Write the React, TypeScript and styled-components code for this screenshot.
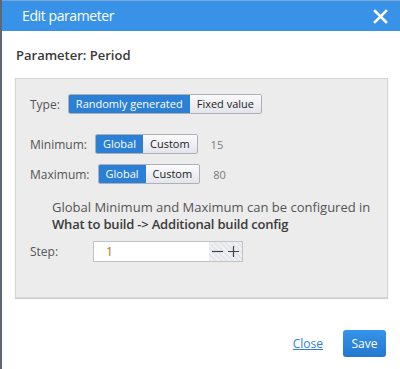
import * as React from "react";
import styled, { createGlobalStyle } from "styled-components";

const GlobalStyle = createGlobalStyle`
  html, body {
    margin: 0;
    padding: 0;
    background: #5d6872;
  }
  body {
    font-family: "Open Sans", "Noto Sans", sans-serif;
    font-size: 13px;
    color: #444;
  }
`;

const Dialog = styled.div`
  margin-left: 2px;
  width: 398px;
  height: 369px;
  background: #ffffff;
  display: flex;
  flex-direction: column;
`;

const Header = styled.div`
  height: 31px;
  background: #3893e8;
  border-top: 1px solid #7aa6cf;
  box-sizing: border-box;
  display: flex;
  align-items: center;
  justify-content: space-between;
  padding: 0 11px 0 20px;
  color: #ffffff;
`;

const Title = styled.div`
  font-size: 14px;
  letter-spacing: -0.4px;
  line-height: 20px;
`;

const CloseIcon = styled.button`
  border: 0;
  background: none;
  padding: 0;
  width: 18px;
  height: 18px;
  display: flex;
  align-items: center;
  justify-content: center;
  cursor: pointer;
`;

const Body = styled.div`
  flex: 1;
  padding: 15px 12px 0 14px;
`;

const ParamTitle = styled.div`
  font-weight: 600;
  font-size: 13px;
  line-height: 18px;
  color: #3a3a3a;
  margin-bottom: 14px;
`;

const Panel = styled.div`
  background: #ececec;
  border: 1px solid #d6d6d6;
  box-shadow: 0 1px 1px rgba(0, 0, 0, 0.18);
  margin-left: -1px;
  padding: 15px 14px 34px 14px;
  height: 220px;
  box-sizing: border-box;
`;

const Row = styled.div<{ gap: number }>`
  display: flex;
  align-items: center;
  height: 20px;
  margin-top: ${p => p.gap}px;
`;

const Label = styled.span<{ width?: number }>`
  color: #555;
  font-size: 12px;
  margin-right: 8px;
  ${p => (p.width ? `width: ${p.width}px; margin-right: 0;` : "")}
`;

const Group = styled.div`
  display: flex;
  border: 1px solid #aeb0b8;
  border-radius: 2px;
  overflow: hidden;
  height: 20px;
  box-sizing: border-box;
`;

const Seg = styled.button<{ active: boolean }>`
  border: 0;
  margin: 0;
  font-family: inherit;
  font-size: 11px;
  line-height: 18px;
  padding: 0 7px;
  color: ${p => (p.active ? "#ffffff" : "#222")};
  background: ${p =>
    p.active ? "#2b80d6" : "linear-gradient(#fbfbfd, #e4e4ec)"};
  cursor: pointer;
`;

const Value = styled.span`
  margin-left: 13px;
  color: #7a7a7a;
  font-size: 11px;
`;

const Note = styled.div`
  margin: 15px 0 0 22px;
  line-height: 17px;
  color: #555;
`;

const Bold = styled.div`
  font-weight: 600;
  letter-spacing: -0.2px;
  color: #3a3a3a;
`;

const StepBox = styled.div`
  display: flex;
  width: 150px;
  height: 21px;
  border: 1px solid #c2c2c2;
  box-sizing: border-box;
  background: #ffffff;
`;

const StepInput = styled.input`
  flex: 1;
  min-width: 0;
  border: 0;
  outline: none;
  font-family: inherit;
  font-size: 12px;
  color: #b36f1c;
  padding: 0 0 0 12px;
  background: transparent;
`;

const Spin = styled.div`
  width: 33px;
  display: flex;
  align-items: center;
  justify-content: space-around;
  background: repeating-linear-gradient(
    45deg,
    #e6e7ee 0px,
    #e6e7ee 2px,
    #f0f1f5 2px,
    #f0f1f5 4px
  );
`;

const SpinButton = styled.span`
  display: flex;
  cursor: pointer;
`;

const Footer = styled.div`
  display: flex;
  justify-content: flex-end;
  align-items: center;
  gap: 20px;
  padding: 0 14px 12px 0;
`;

const CloseLink = styled.a`
  color: #2f7fd2;
  text-decoration: underline;
  font-size: 12px;
  cursor: pointer;
`;

const SaveButton = styled.button`
  width: 43px;
  height: 27px;
  border: 0;
  border-radius: 3px;
  background: linear-gradient(#3793ea, #2378cf);
  color: #ffffff;
  font-family: inherit;
  font-size: 12px;
  cursor: pointer;
`;

export default function App() {
  const [type, setType] = React.useState("random");
  const [min, setMin] = React.useState("global");
  const [max, setMax] = React.useState("global");
  const [step, setStep] = React.useState(1);

  return (
    <>
      <GlobalStyle />
      <Dialog>
        <Header>
          <Title>Edit parameter</Title>
          <CloseIcon aria-label="close">
            <svg width="15" height="15" viewBox="0 0 15 15">
              <path d="M2 2 L13 13 M13 2 L2 13" stroke="#fff" strokeWidth="2.6" strokeLinecap="square" />
            </svg>
          </CloseIcon>
        </Header>
        <Body>
          <ParamTitle>Parameter: Period</ParamTitle>
          <Panel>
            <Row gap={0}>
              <Label>Type:</Label>
              <Group>
                <Seg active={type === "random"} onClick={() => setType("random")}>Randomly generated</Seg>
                <Seg active={type === "fixed"} onClick={() => setType("fixed")}>Fixed value</Seg>
              </Group>
            </Row>
            <Row gap={20}>
              <Label>Minimum:</Label>
              <Group>
                <Seg active={min === "global"} onClick={() => setMin("global")}>Global</Seg>
                <Seg active={min === "custom"} onClick={() => setMin("custom")}>Custom</Seg>
              </Group>
              <Value>15</Value>
            </Row>
            <Row gap={10}>
              <Label>Maximum:</Label>
              <Group>
                <Seg active={max === "global"} onClick={() => setMax("global")}>Global</Seg>
                <Seg active={max === "custom"} onClick={() => setMax("custom")}>Custom</Seg>
              </Group>
              <Value>80</Value>
            </Row>
            <Note>
              Global Minimum and Maximum can be configured in
              <Bold>What to build -&gt; Additional build config</Bold>
            </Note>
            <Row gap={8}>
              <Label width={63}>Step:</Label>
              <StepBox>
                <StepInput value={step} onChange={e => setStep(Number(e.target.value) || 0)} />
                <Spin>
                  <SpinButton onClick={() => setStep(step - 1)}>
                    <svg width="11" height="11" viewBox="0 0 11 11">
                      <path d="M0 5.5 H11" stroke="#444" strokeWidth="1.2" />
                    </svg>
                  </SpinButton>
                  <SpinButton onClick={() => setStep(step + 1)}>
                    <svg width="11" height="11" viewBox="0 0 11 11">
                      <path d="M0 5.5 H11 M5.5 0 V11" stroke="#444" strokeWidth="1.2" />
                    </svg>
                  </SpinButton>
                </Spin>
              </StepBox>
            </Row>
          </Panel>
        </Body>
        <Footer>
          <CloseLink>Close</CloseLink>
          <SaveButton>Save</SaveButton>
        </Footer>
      </Dialog>
    </>
  );
}
